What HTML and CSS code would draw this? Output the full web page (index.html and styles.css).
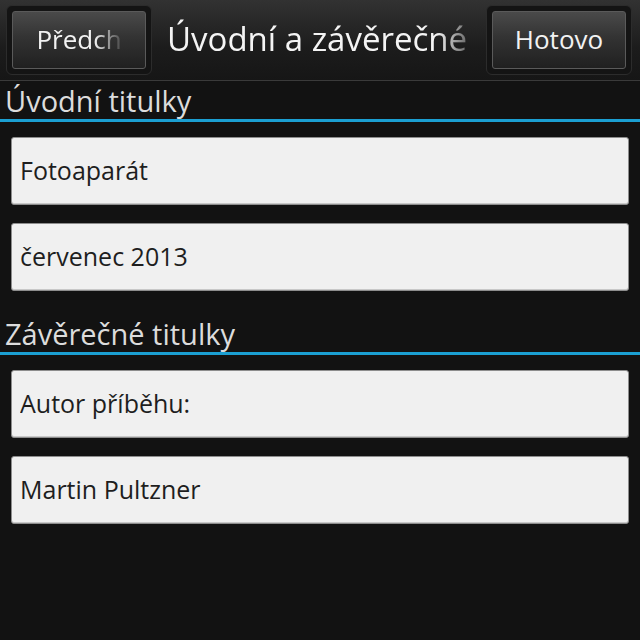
FILE: index.html
```html
<!DOCTYPE html>
<html lang="cs">

<head>
    <meta charset="UTF-8">
    <meta name="viewport" content="width=device-width, initial-scale=1.0">
    <title>Úvodní a závěrečné titulky</title>
    <link rel="stylesheet" href="styles.css">
</head>

<body>
    <div class="title-bar">
        <div class="bar-button">
            <button class="bar-button-inner"><span class="fade-text">Předch</span></button>
        </div>
        <h1 class="bar-title"><span class="fade-title">Úvodní a závěrečné</span></h1>
        <div class="bar-button">
            <button class="bar-button-inner">Hotovo</button>
        </div>
    </div>

    <div class="section">
        <h2 class="section-header">Úvodní titulky</h2>
        <div class="fields">
            <input class="field" type="text" value="Fotoaparát">
            <input class="field" type="text" value="červenec 2013">
        </div>
    </div>

    <div class="section">
        <h2 class="section-header">Závěrečné titulky</h2>
        <div class="fields">
            <input class="field" type="text" value="Autor příběhu:">
            <input class="field" type="text" value="Martin Pultzner">
        </div>
    </div>
</body>

</html>
```

FILE: styles.css
```css
body {
    margin: 0;
    font-family: "Open Sans", "DejaVu Sans", sans-serif;
    background-color: #121212;
    color: #e6e6e6;
}

.title-bar {
    display: flex;
    align-items: center;
    gap: 15px;
    height: 81px;
    padding: 0 8px 0 6px;
    box-sizing: border-box;
    background: linear-gradient(#323232, #1c1c1c 60%, #161616);
    border-bottom: 1px solid #3a3a3a;
}

.bar-button {
    width: 146px;
    height: 70px;
    padding: 5px;
    box-sizing: border-box;
    border-radius: 6px;
    background-color: #141414;
    border: 1px solid #2c2c2c;
    flex-shrink: 0;
}

.bar-button-inner {
    width: 100%;
    height: 100%;
    border: 1px solid #5a5a5a;
    border-radius: 3px;
    background: linear-gradient(#4a4a4a, #333 45%, #202020);
    color: #f2f2f2;
    font-family: inherit;
    font-size: 26px;
    padding: 0 0 3px 0;
    white-space: nowrap;
}

.fade-text {
    -webkit-mask-image: linear-gradient(to right, #000 68%, rgba(0, 0, 0, 0.1));
    mask-image: linear-gradient(to right, #000 68%, rgba(0, 0, 0, 0.1));
}

.bar-title {
    flex: 1;
    min-width: 0;
    margin: 0;
    font-size: 33px;
    font-weight: normal;
    color: #f4f4f4;
    white-space: nowrap;
    padding-bottom: 4px;
}

.fade-title {
    -webkit-mask-image: linear-gradient(to right, #000 90%, rgba(0, 0, 0, 0.35));
    mask-image: linear-gradient(to right, #000 90%, rgba(0, 0, 0, 0.35));
}

.section-header {
    margin: 0;
    padding: 2px 5px 0;
    height: 36px;
    font-size: 29px;
    font-weight: normal;
    line-height: 36px;
    color: #dcdcdc;
    border-bottom: 3px solid #1b9fd2;
}

.fields {
    display: flex;
    flex-direction: column;
    gap: 18px;
    padding: 15px 11px 23px;
}

.field {
    height: 68px;
    box-sizing: border-box;
    margin: 0;
    padding: 0 8px 2px;
    border: 1px solid #8d8d8d;
    border-radius: 3px;
    background-color: #f0f0f0;
    box-shadow: inset 0 -1px 0 #c8c8c8;
    color: #1e1e1e;
    font-family: inherit;
    font-size: 25px;
    outline: none;
}
```
